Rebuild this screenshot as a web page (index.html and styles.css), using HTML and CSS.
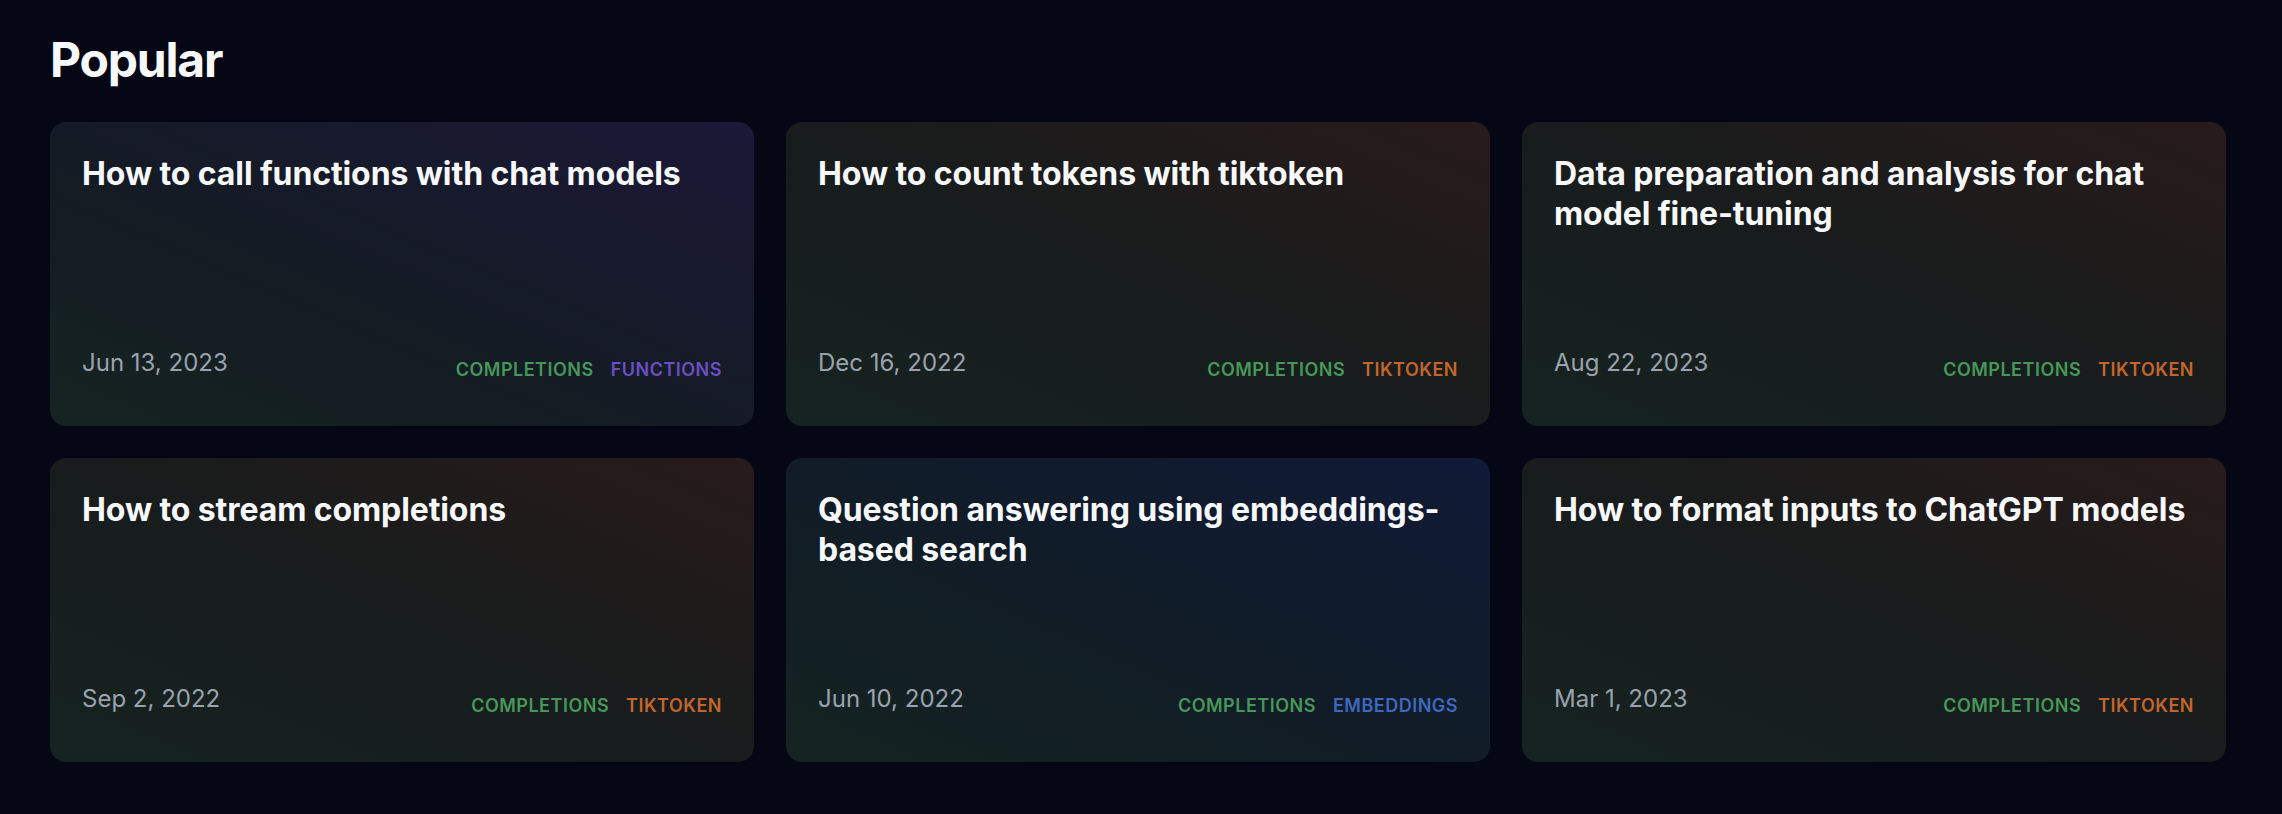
FILE: index.html
```html
<!DOCTYPE html>
<html lang="en">
<head>
<meta charset="utf-8">
<title>Popular</title>
<link rel="stylesheet" href="styles.css">
</head>
<body>
<main class="page">
  <h1 class="heading">Popular</h1>
  <section class="grid">
    <a class="card tint-functions">
      <h2 class="card-title">How to call functions with chat models</h2>
      <div class="card-footer">
        <span class="date">Jun 13, 2023</span>
        <span class="tags"><span class="tag tag-completions">COMPLETIONS</span><span class="tag tag-functions">FUNCTIONS</span></span>
      </div>
    </a>
    <a class="card tint-tiktoken">
      <h2 class="card-title">How to count tokens with tiktoken</h2>
      <div class="card-footer">
        <span class="date">Dec 16, 2022</span>
        <span class="tags"><span class="tag tag-completions">COMPLETIONS</span><span class="tag tag-tiktoken">TIKTOKEN</span></span>
      </div>
    </a>
    <a class="card tint-tiktoken">
      <h2 class="card-title">Data preparation and analysis for chat model fine-tuning</h2>
      <div class="card-footer">
        <span class="date">Aug 22, 2023</span>
        <span class="tags"><span class="tag tag-completions">COMPLETIONS</span><span class="tag tag-tiktoken">TIKTOKEN</span></span>
      </div>
    </a>
    <a class="card tint-tiktoken">
      <h2 class="card-title">How to stream completions</h2>
      <div class="card-footer">
        <span class="date">Sep 2, 2022</span>
        <span class="tags"><span class="tag tag-completions">COMPLETIONS</span><span class="tag tag-tiktoken">TIKTOKEN</span></span>
      </div>
    </a>
    <a class="card tint-embeddings">
      <h2 class="card-title">Question answering using embeddings-based search</h2>
      <div class="card-footer">
        <span class="date">Jun 10, 2022</span>
        <span class="tags"><span class="tag tag-completions">COMPLETIONS</span><span class="tag tag-embeddings">EMBEDDINGS</span></span>
      </div>
    </a>
    <a class="card tint-tiktoken">
      <h2 class="card-title">How to format inputs to ChatGPT models</h2>
      <div class="card-footer">
        <span class="date">Mar 1, 2023</span>
        <span class="tags"><span class="tag tag-completions">COMPLETIONS</span><span class="tag tag-tiktoken">TIKTOKEN</span></span>
      </div>
    </a>
  </section>
</main>
</body>
</html>
```
FILE: styles.css
```css
html, body {
  margin: 0;
  padding: 0;
  background: #050814;
}
body {
  font-family: Inter, "Noto Sans", "Liberation Sans", sans-serif;
  color: #f5f6f8;
}
.page {
  padding: 36px 56px 40px 50px;
}
.heading {
  margin: 0 0 38px 0;
  font-size: 48px;
  line-height: 48px;
  font-weight: 700;
  letter-spacing: -1.2px;
  color: #f7f8fa;
}
.grid {
  display: grid;
  grid-template-columns: repeat(3, 1fr);
  grid-auto-rows: 304px;
  gap: 32px;
}
.card {
  display: flex;
  flex-direction: column;
  border-radius: 16px;
  padding: 32px 32px 0 32px;
  text-decoration: none;
  color: inherit;
  background: linear-gradient(to top right, #152320 0%, #151b1f 50%, #1f1b1c 100%);
}
.tint-functions {
  background: linear-gradient(to top right, #152320 0%, #141b24 45%, #1c1838 100%);
}
.tint-tiktoken {
  background: linear-gradient(to top right, #152320 0%, #181c1c 50%, #281a1a 100%);
}
.tint-embeddings {
  background: linear-gradient(to top right, #152320 0%, #111c26 45%, #101a37 100%);
}
.card-title {
  margin: 0;
  font-size: 32px;
  line-height: 40px;
  font-weight: 700;
  letter-spacing: -0.1px;
  color: #f7f8fa;
}
.card-footer {
  margin-top: auto;
  display: flex;
  justify-content: space-between;
  align-items: flex-start;
  padding-bottom: 42px;
}
.date {
  font-size: 24px;
  line-height: 32px;
  color: #9aa2ae;
}
.tags {
  display: flex;
  gap: 17px;
  padding-top: 9px;
}
.tag {
  font-size: 18px;
  line-height: 28px;
  font-weight: 600;
  letter-spacing: 0.5px;
}
.tag-completions { color: #46975a; }
.tag-functions { color: #6a4fc2; }
.tag-tiktoken { color: #c0662d; }
.tag-embeddings { color: #3e68bf; }
```
